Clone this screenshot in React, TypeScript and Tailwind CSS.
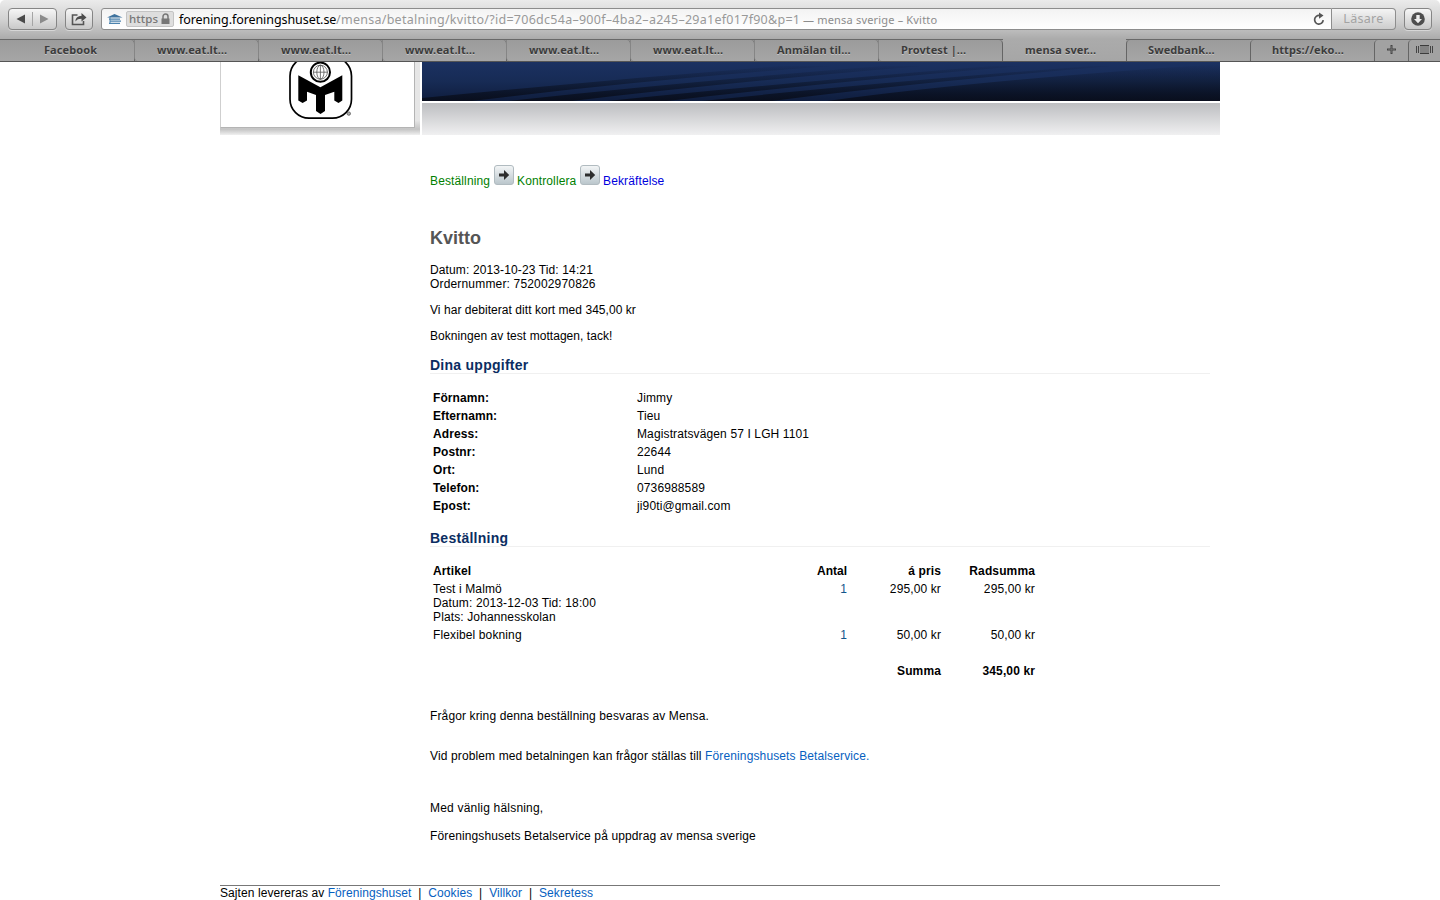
import React from "react";

const tabs = [
  "www.eat.lt…",
  "www.eat.lt…",
  "www.eat.lt…",
  "www.eat.lt…",
  "www.eat.lt…",
  "Anmälan til…",
  "Provtest |…",
  "mensa sver…",
  "Swedbank…",
  "https://eko…",
];

const details = [
  ["Förnamn:", "Jimmy"],
  ["Efternamn:", "Tieu"],
  ["Adress:", "Magistratsvägen 57 I LGH 1101"],
  ["Postnr:", "22644"],
  ["Ort:", "Lund"],
  ["Telefon:", "0736988589"],
  ["Epost:", "ji90ti@gmail.com"],
];

const button =
  "flex h-[22px] items-center justify-center rounded-[4px] border border-[#858585] bg-linear-to-b from-[#f6f6f6] to-[#c9c9c9] shadow-[0_1px_0_rgba(255,255,255,0.4)]";

function Toolbar() {
  return (
    <div className="flex h-[39px] items-start bg-linear-to-b from-[#ebebeb] via-[#d2d2d2] to-[#ababab] pt-[8px] pl-[8px]">
      <div className={`${button} w-[49px] shrink-0`}>
        <svg width="47" height="20" viewBox="0 0 47 20">
          <path d="M16 5.5v9L7.5 10z" fill="#4a4a4a" />
          <path d="M23.5 3v14" stroke="#a5a5a5" />
          <path d="M31 5.5v9L39.500 10z" fill="#8b8b8b" />
        </svg>
      </div>
      <div className={`${button} ml-[8px] w-[28px] shrink-0`}>
        <svg width="20" height="16" viewBox="0 0 20 16">
          <path d="M8.500 4H3.500v9.500h11V10" fill="none" stroke="#555" strokeWidth="1.600" />
          <path d="M6.500 10.500C6.500 6.500 9 5 12.500 5V2l5 4.500-5 4V7.800C9.500 7.800 8 8.500 6.500 10.500z" fill="#4d4d4d" />
        </svg>
      </div>
      <div className="ml-[8px] flex h-[22px] w-[1231px] shrink-0 items-center rounded-l-[3px] border border-[#8d8d8d] bg-linear-to-b from-[#f3f3f3] to-white pl-[4px]">
        <svg width="17" height="12" viewBox="0 0 17 12" className="shrink-0">
          <path d="M8.500 1L16.500 4.500H1z" fill="#3f739e" />
          <path d="M3 5.500h11v1.300H3zM4 7.500h11v1.300H4zM3 9.700h11v1.300H3z" fill="#4c83ae" />
          <path d="M4 4v6" stroke="#4c83ae" />
        </svg>
        <div className="ml-[3px] flex h-[16px] w-[48px] shrink-0 items-center rounded-[2px] border border-[#c4c4c4] bg-[#dedede] pl-[2px] font-['Noto_Sans',sans-serif] text-[11.500px] leading-[14px] font-medium tracking-[0.100px] text-[#777]">
          https
          <svg width="9" height="12" viewBox="0 0 9 12" className="ml-[3px]">
            <path d="M2 6V3.500a2.500 2.500 0 0 1 5 0V6" fill="none" stroke="#777" strokeWidth="1.500" />
            <path d="M.5 5.500h8V11h-8z" fill="#777" />
          </svg>
        </div>
        <div className="ml-[5px] flex flex-1 items-center pt-px font-['Noto_Sans',sans-serif] leading-[18px] whitespace-pre text-[#999]">
          <span className="w-[157px] text-[12.500px] tracking-[-0.070px] text-black">forening.foreningshuset.se</span>
          <span className="w-[464px] text-[12.500px] tracking-[0.270px]">/mensa/betalning/kvitto/?id=706dc54a–900f–4ba2–a245–29a1ef017f90&amp;p=1</span>
          <span className="text-[11px] tracking-[0.180px] text-[#8c8c8c]"> — mensa sverige – Kvitto</span>
        </div>
        <svg width="12" height="14" viewBox="0 0 12 14" className="mr-[6px] shrink-0">
          <path d="M10.200 8.200A4.300 4.300 0 1 1 6.500 3.500" fill="none" stroke="#555" strokeWidth="1.700" />
          <path d="M6 .5L10.500 3.500 6 6.800z" fill="#555" />
        </svg>
      </div>
      <div className="flex h-[22px] w-[64px] shrink-0 items-center justify-center rounded-r-[4px] border border-l-0 border-[#8d8d8d] bg-linear-to-b from-[#f4f4f4] to-[#cdcdcd] font-['Noto_Sans',sans-serif] text-[12.500px] tracking-[0.300px] text-[#a3a3a3]">
        Läsare
      </div>
      <div className={`${button} ml-[8px] w-[28px] shrink-0`}>
        <svg width="14" height="14" viewBox="0 0 14 14">
          <circle cx="7" cy="7" r="6.800" fill="#4e4e4e" />
          <path d="M5.300 3h3.400v4H11l-4 4.300L3 7h2.300z" fill="#eee" />
        </svg>
      </div>
    </div>
  );
}

function TabBar() {
  return (
    <div className="flex h-[23px] border-t border-b border-t-[#696969] border-b-[#555] bg-[#a2a2a2] font-['Noto_Sans',sans-serif] text-[11px] leading-[19px] font-bold tracking-[0.080px] text-[#3c3c3c] [text-shadow:0_1px_0_#c4c4c4]">
      <div className="w-[135px] shrink-0 rounded-tr-[4px] border-r border-[#656565] bg-linear-to-b from-[#9b9b9b] to-[#a6a6a6] pl-[44px]">Facebook</div>
      {tabs.map((t, i) =>
        i === 7 ? (
          <div key={i} className="-mt-px w-[123px] shrink-0 bg-linear-to-b from-[#ababab] to-[#a6a6a6] pt-px pl-[22px] whitespace-nowrap">
            {t}
          </div>
        ) : (
          <div
            key={i}
            className={
              i < 7
                ? "w-[124px] shrink-0 rounded-tr-[4px] rounded-bl-[4px] border-r border-[#656565] bg-linear-to-b from-[#9b9b9b] to-[#a6a6a6] pl-[22px] whitespace-nowrap shadow-[-1px_0_0_#858585]"
                : "w-[124px] shrink-0 rounded-tl-[4px] rounded-br-[4px] border-l border-[#656565] bg-linear-to-b from-[#9b9b9b] to-[#a6a6a6] pl-[21px] whitespace-nowrap"
            }
          >
            {t}
          </div>
        ),
      )}
      <div className="flex w-[34px] shrink-0 items-center justify-center rounded-tl-[4px] rounded-br-[4px] border-l border-[#656565] pb-[2px]">
        <svg width="9" height="9" viewBox="0 0 9 9">
          <path d="M4.500 0v9M0 4.500h9" stroke="#444" strokeWidth="2" />
          <path d="M4.500 1v7M1 4.500h7" stroke="#777" strokeWidth=".6" />
        </svg>
      </div>
      <div className="flex flex-1 items-center justify-center rounded-tl-[4px] border-l border-[#656565] pb-[2px]">
        <svg width="17" height="9" viewBox="0 0 17 9">
          <path d="M.5 1v7M2.500 1v7M14.500 1v7M16.500 1v7" stroke="#444" />
          <path d="M4 .5h9v8H4z" fill="#838383" />
          <path d="M4 .5h9M4 8.500h9" stroke="#3c3c3c" />
        </svg>
      </div>
    </div>
  );
}

function MensaLogo() {
  return (
    <svg width="66" height="60" viewBox="288 62 66 60">
      <rect x="290" y="57" width="61.500" height="61.200" rx="19" fill="#fff" stroke="#000" strokeWidth="1.700" />
      <circle cx="320.400" cy="72.200" r="9.600" fill="#fff" stroke="#000" strokeWidth="2" />
      <g fill="none" stroke="#555" strokeWidth=".8">
        <circle cx="320.400" cy="72.200" r="7" />
        <ellipse cx="320.400" cy="72.200" rx="3.600" ry="7" />
        <path d="M320.400 65v14.500M313 72.200h14.800" />
      </g>
      <path
        d="M298.300 75.300L320.400 87.300 342.300 75.300V100.500L338.500 103 334.300 100.500V91.700L325 95V111L320.500 114 316 111V95L307 91.700V100.500L302.600 103 298.300 100.500z"
        fill="#000"
      />
      <circle cx="348.800" cy="113.600" r="1.700" fill="#aaa" stroke="#555" strokeWidth=".8" />
    </svg>
  );
}

function SiteHeader() {
  return (
    <div className="flex h-[73px] justify-between">
      <div className="h-[73px] w-[200px] bg-linear-to-b from-[#e6e6e6] from-80% via-[#c4c4c4] via-92% to-[#f0f0f0] pr-[5px]">
        <div className="flex h-[66px] justify-center border-r border-b border-l border-[#b4b4b4] border-l-[#cfcfcf] bg-white pl-[7px]">
          <MensaLogo />
        </div>
      </div>
      <div className="w-[798px]">
        <svg width="798" height="39" viewBox="0 0 798 39" className="block">
          <defs>
            <linearGradient id="navy" x1="0" y1="0" x2="0" y2="1">
              <stop offset="0" stopColor="#1b3161" />
              <stop offset=".5" stopColor="#172b55" />
              <stop offset="1" stopColor="#0f1d3d" />
            </linearGradient>
            <linearGradient id="shade" gradientUnits="userSpaceOnUse" x1="0" y1="2" x2="0" y2="39">
              <stop offset="0" stopColor="#080d18" stopOpacity="0" />
              <stop offset=".5" stopColor="#080d18" stopOpacity=".4" />
              <stop offset="1" stopColor="#080c18" stopOpacity=".85" />
            </linearGradient>
          </defs>
          <path d="M0 0h798v39H0z" fill="url(#navy)" />
          <g fill="url(#shade)">
            <path d="M0 36Q180 18 360 4L410 4Q220 18 50 39H0z" />
            <path d="M85 39Q260 20 460 4L500 4Q310 20 150 39z" />
            <path d="M185 39Q350 22 570 4L600 4Q410 20 245 39z" />
            <path d="M280 39Q450 21 670 4L690 4Q500 20 350 39z" />
            <path d="M405 39Q560 18 798 2V39z" />
          </g>
        </svg>
        <div className="mt-[2px] h-[32px] bg-linear-to-b from-[#bdbec1] to-[#f0f0f1]" />
      </div>
    </div>
  );
}

function StepArrow() {
  return (
    <svg width="20" height="20" viewBox="0 0 20 20" className="mx-[3px] shrink-0">
      <defs>
        <linearGradient id="step" x1="0" y1="0" x2="0" y2="1">
          <stop offset="0" stopColor="#f4f6f7" />
          <stop offset="1" stopColor="#b9c5cb" />
        </linearGradient>
      </defs>
      <rect x=".5" y=".5" width="19" height="19" rx="2.500" fill="url(#step)" stroke="#b1bbc0" />
      <path d="M5 8.500h5V5l5.200 5-5.200 5v-3.500H5z" fill="#2d2d2d" />
    </svg>
  );
}

function SectionTitle({ children }: { children: React.ReactNode }) {
  return (
    <h2 className="h-[17px] border-b border-[#f0f0f0] text-[14px] leading-[16px] font-bold tracking-[0.260px] text-[#0b2d62]">{children}</h2>
  );
}

export default function App() {
  return (
    <div className="h-[900px] w-[1440px] overflow-hidden bg-white font-['Liberation_Sans',Arial,sans-serif] text-[12px] leading-[14px] text-black">
      <div className="overflow-hidden rounded-t-[5px]">
        <Toolbar />
        <TabBar />
      </div>
      <div className="mx-auto w-[1000px] tracking-[0.125px]">
        <SiteHeader />
        <main className="pr-[10px] pl-[210px]">
          <div className="mt-[30px] flex h-[23px]">
            <span className="w-[61px] pt-[9px] whitespace-nowrap text-[#008000]">Beställning</span>
            <StepArrow />
            <span className="w-[60px] pt-[9px] whitespace-nowrap text-[#008000]">Kontrollera</span>
            <StepArrow />
            <span className="pt-[9px] text-[#0000dd]">Bekräftelse</span>
          </div>
          <h1 className="mt-[40px] text-[18px] leading-[20px] font-bold tracking-normal text-[#555]">Kvitto</h1>
          <p className="mt-[15px]">
            Datum: 2013-10-23 Tid: 14:21
            <br />
            <span className="tracking-[0.170px]">Ordernummer: 752002970826</span>
          </p>
          <p className="mt-[12px] tracking-[0.050px]">Vi har debiterat ditt kort med 345,00 kr</p>
          <p className="mt-[12px] mb-[14px] tracking-[0.050px]">Bokningen av test mottagen, tack!</p>
          <SectionTitle>Dina uppgifter</SectionTitle>
          <div className="mt-[15px] mb-[15px] pl-[3px]">
            {details.map(([k, v]) => (
              <div key={k} className="flex py-[2px]">
                <b className="w-[204px] tracking-[0.080px]">{k}</b>
                <span>{v}</span>
              </div>
            ))}
          </div>
          <SectionTitle>Beställning</SectionTitle>
          <div className="mt-[15px] grid w-[605px] grid-cols-[317px_100px_94px_94px] pl-0 text-right *:py-[2px]">
            <b className="pl-[3px] text-left">Artikel</b>
            <b className="tracking-normal">Antal</b>
            <b>á pris</b>
            <b>Radsumma</b>
            <span className="pl-[3px] text-left">
              Test i Malmö
              <br />
              Datum: 2013-12-03 Tid: 18:00
              <br />
              Plats: Johannesskolan
            </span>
            <span className="text-[#12568c]">1</span>
            <span>295,00 kr</span>
            <span>295,00 kr</span>
            <span className="pl-[3px] text-left">Flexibel bokning</span>
            <span className="text-[#12568c]">1</span>
            <span>50,00 kr</span>
            <span>50,00 kr</span>
            <b className="col-start-3 mt-[18px]">Summa</b>
            <b className="mt-[18px]">345,00 kr</b>
          </div>
          <p className="mt-[29px]">Frågor kring denna beställning besvaras av Mensa.</p>
          <p className="mt-[26px]">
            Vid problem med betalningen kan frågor ställas till <a className="text-[#0660c0]">Föreningshusets Betalservice.</a>
          </p>
          <p className="mt-[38px] tracking-[0.200px]">Med vänlig hälsning,</p>
          <p className="mt-[14px]">Föreningshusets Betalservice på uppdrag av mensa sverige</p>
        </main>
        <footer className="mt-[42px] border-t border-[#777] tracking-[0.080px] whitespace-pre">
          Sajten levereras av <a className="text-[#0660c0]">Föreningshuset</a>
          {"  |  "}
          <a className="text-[#0660c0]">Cookies</a>
          {"  |  "}
          <a className="text-[#0660c0]">Villkor</a>
          {"  |  "}
          <a className="text-[#0660c0]">Sekretess</a>
        </footer>
      </div>
    </div>
  );
}
